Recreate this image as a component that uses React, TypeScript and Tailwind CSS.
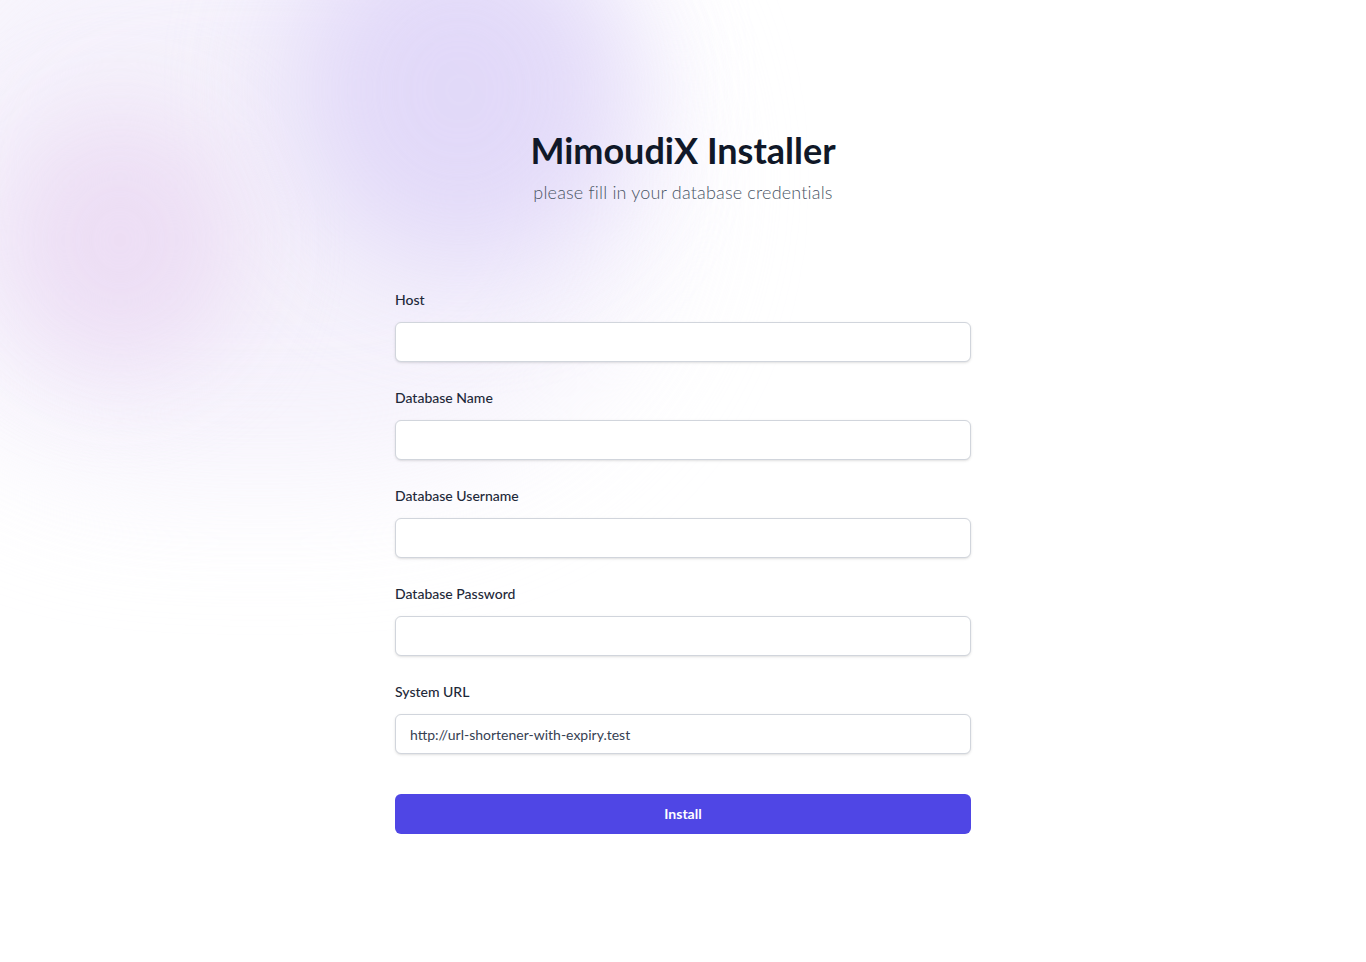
export default function App() {
  const fields = [
    { label: "Host", value: "" },
    { label: "Database Name", value: "" },
    { label: "Database Username", value: "" },
    { label: "Database Password", value: "" },
    { label: "System URL", value: "http://url-shortener-with-expiry.test" },
  ];
  return (
    <div className="relative min-h-screen overflow-hidden bg-white" style={{ fontFamily: "Lato, 'Open Sans', sans-serif" }}>
      <Backdrop />
      <main className="relative mx-auto w-full max-w-xl pt-[130px] pb-24">
        <h1 className="text-center text-4xl leading-10 font-bold text-gray-900">MimoudiX Installer</h1>
        <p className="mt-2 text-center text-lg font-light tracking-[0.01em] text-gray-600">please fill in your database credentials</p>
        <form className="mt-[84px] flex flex-col gap-[26px]" onSubmit={(e) => e.preventDefault()}>
          {fields.map((f) => (
            <div key={f.label} className="flex flex-col">
              <label className="text-sm leading-5 font-medium text-gray-800">{f.label}</label>
              <input
                type={f.label === "Database Password" ? "password" : "text"}
                defaultValue={f.value}
                className="mt-3 h-10 w-full rounded-md border border-gray-300 bg-white px-3.5 text-sm text-gray-700 shadow-sm outline-none"
              />
            </div>
          ))}
          <button type="submit" className="mt-[14px] h-10 w-full rounded-md bg-[#4f46e5] text-sm font-bold text-white">
            Install
          </button>
        </form>
      </main>
    </div>
  );
}

function Backdrop() {
  return (
    <div className="pointer-events-none absolute inset-0">
      <div className="absolute -left-[140px] -top-[120px] h-[600px] w-[800px] rounded-full bg-[#f3effb] opacity-80 blur-[70px]" />
      <div className="absolute left-[290px] -top-[90px] h-[360px] w-[340px] rounded-full bg-[#ddd3f8] opacity-80 blur-[60px]" />
      <div className="absolute left-[0px] top-[110px] h-[260px] w-[240px] rounded-full bg-[#ecdcf4] opacity-90 blur-[50px]" />
    </div>
  );
}
